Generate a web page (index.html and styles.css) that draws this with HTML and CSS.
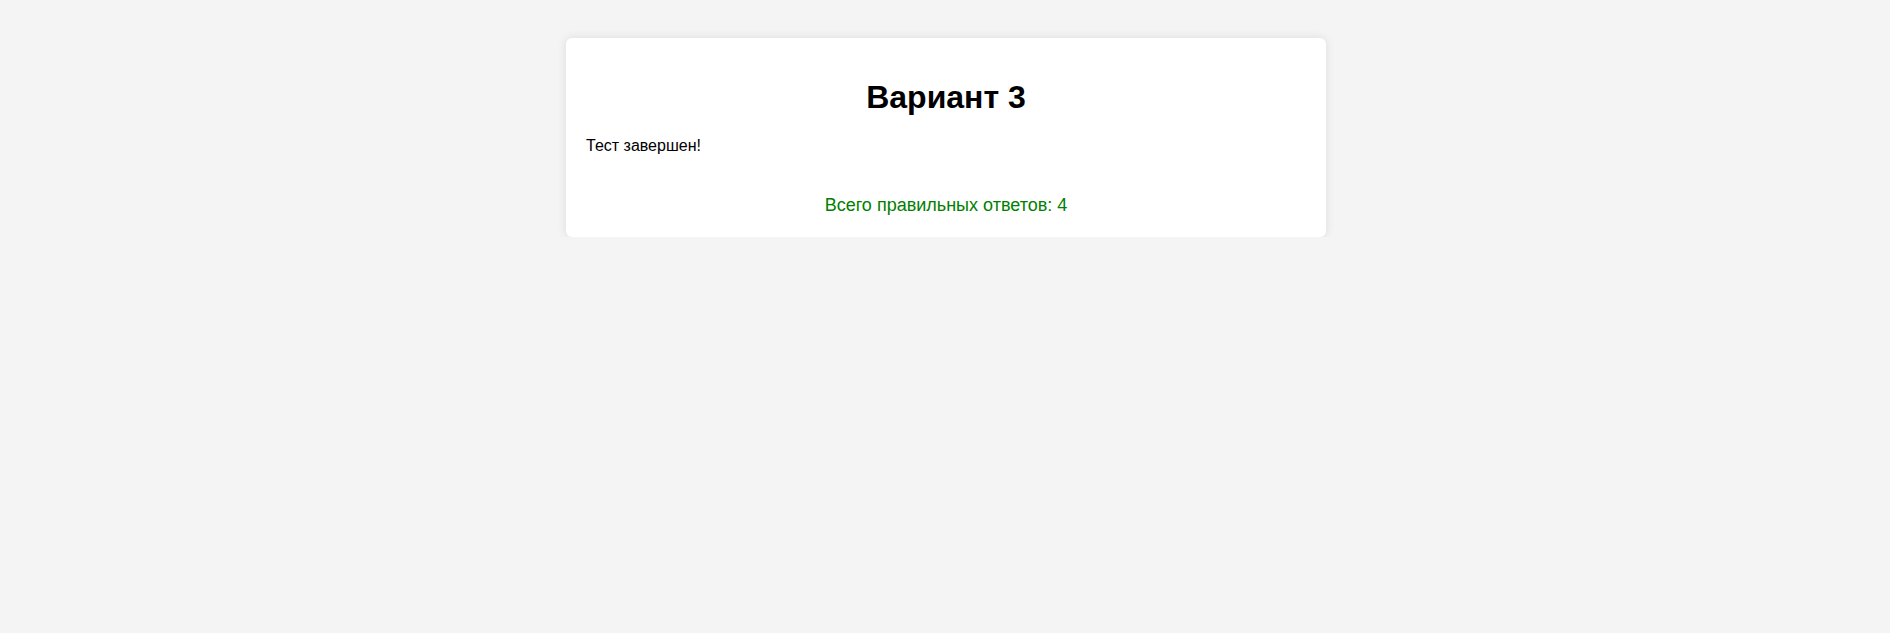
FILE: index.html
```html
<!DOCTYPE html>
<html lang="ru">
<head>
<meta charset="utf-8">
<title>Вариант 3</title>
<link rel="stylesheet" href="styles.css">
</head>
<body>
<div class="container">
  <h1 class="title">Вариант 3</h1>
  <p class="message">Тест завершен!</p>
  <p class="score">Всего правильных ответов: 4</p>
</div>
</body>
</html>
```

FILE: styles.css
```css
html, body {
  background: #f4f4f4;
}
body {
  margin: 8px 7px 8px 9px;
  font-family: "Liberation Sans", Arial, sans-serif;
  color: #000;
}
.container {
  max-width: 720px;
  margin: 30px auto 0;
  background: #fff;
  padding: 20px 20px 21px;
  border-radius: 6px;
  box-shadow: 0 0 10px rgba(0, 0, 0, 0.1);
}
.title {
  font-size: 32px;
  font-weight: bold;
  text-align: center;
  margin: 21px 0 21px;
}
.message {
  font-size: 16px;
  margin: 0;
}
.score {
  font-size: 18px;
  color: #008000;
  text-align: center;
  margin: 40px 0 0;
}
```
